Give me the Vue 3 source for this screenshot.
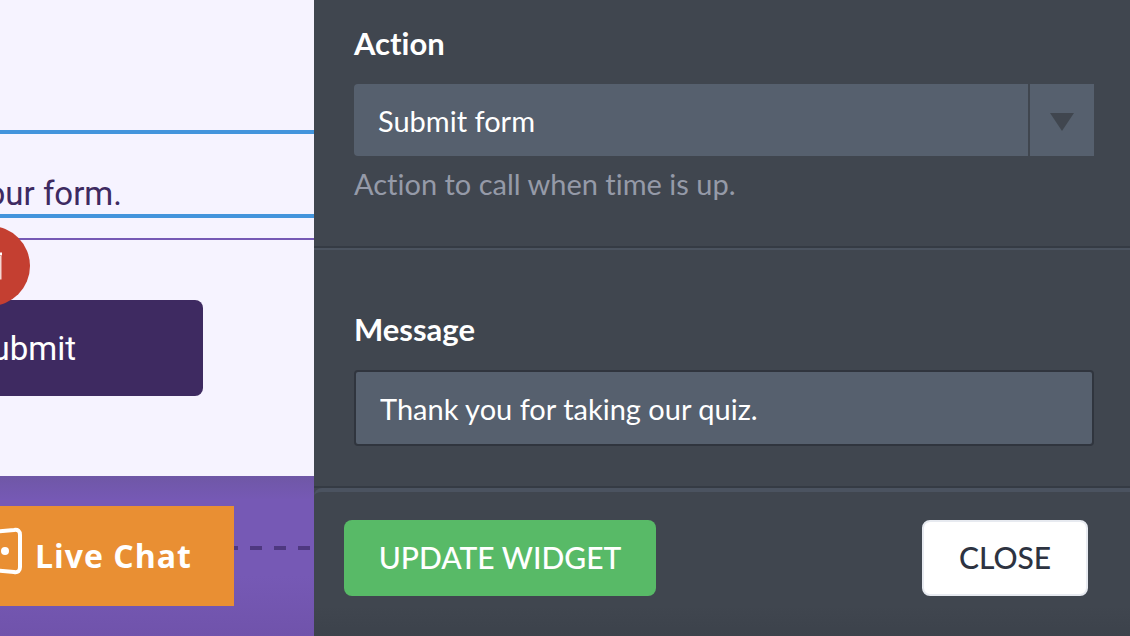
<script setup>
import { ref } from 'vue'

const action = ref('Submit form')
const message = ref('Thank you for taking our quiz.')
</script>

<template>
  <div class="editor">
    <main class="preview">
      <section class="form-card">
        <div class="widget">
          <p class="widget-text">our form.</p>
          <button class="remove" type="button" aria-label="Remove widget">
            <svg viewBox="0 0 24 32" width="24" height="32" aria-hidden="true">
              <path d="M0 4H24M8 4V1H16V4" fill="none" stroke="#fff" stroke-width="3" />
              <path d="M2 6V28H22V6" fill="none" stroke="#f3d6d2" stroke-width="3" />
              <path d="M9 10V24M15 10V24" stroke="#fff" stroke-width="2" />
            </svg>
          </button>
        </div>
        <div class="submit-row">
          <button class="submit" type="button">Submit</button>
        </div>
      </section>
      <div class="chat-row">
        <button class="chat" type="button">
          <svg class="chat-icon" viewBox="0 0 48 48" width="48" height="48" aria-hidden="true">
            <path
              d="M7 6L40 3Q46 2 46 8V40Q46 46 40 45L7 42Q2 42 2 37V11Q2 6 7 6Z"
              fill="none"
              stroke="#fff"
              stroke-width="4"
              stroke-linejoin="round"
            />
            <circle cx="31" cy="24" r="4" fill="#fff" />
            <circle cx="15" cy="24" r="4" fill="#fff" />
          </svg>
          <span>Live Chat</span>
        </button>
        <span class="dashes"></span>
      </div>
    </main>

    <aside class="panel">
      <section class="group action">
        <label class="title" for="action">Action</label>
        <div class="select">
          <select id="action" v-model="action">
            <option>Submit form</option>
          </select>
          <span class="arrow">
            <svg viewBox="0 0 24 18" width="24" height="18" aria-hidden="true">
              <path d="M0 0H24L12 18Z" fill="#40464f" />
            </svg>
          </span>
        </div>
        <p class="hint">Action to call when time is up.</p>
      </section>
      <section class="group message">
        <label class="title" for="message">Message</label>
        <input id="message" v-model="message" type="text" />
      </section>
      <footer class="actions">
        <button class="update" type="button">UPDATE WIDGET</button>
        <button class="close" type="button">CLOSE</button>
      </footer>
    </aside>
  </div>
</template>

<style>
body {
  margin: 0;
}
</style>

<style scoped>
* {
  box-sizing: border-box;
}
button,
input,
select {
  margin: 0;
  border: 0;
  font: inherit;
  color: inherit;
}
.editor {
  display: grid;
  grid-template-columns: minmax(0, 314fr) minmax(0, 816fr);
  min-height: 100vh;
  overflow: hidden;
}

.preview {
  display: flex;
  flex-direction: column;
  overflow: hidden;
  background: linear-gradient(#6f57a6, #7659b5 24px calc(100% - 60px), #7053ab);
  background-size: 100% 160px;
  background-position: bottom;
  font-family: Roboto, sans-serif;
}
.form-card {
  padding: 130px 0 80px;
  background: #f6f3ff;
}
.widget {
  position: relative;
  display: flex;
  justify-content: flex-end;
  height: 88px;
  padding: 36px 192px 0 0;
  border-top: 4px solid #4394dc;
  border-bottom: 4px solid #4394dc;
}
.widget-text {
  margin: 0;
  font-size: 33px;
  line-height: 48px;
  white-space: nowrap;
  color: #3e2a61;
}
.remove {
  position: absolute;
  left: -50px;
  top: 92px;
  display: grid;
  place-items: center;
  width: 80px;
  height: 80px;
  padding: 0;
  border-radius: 50%;
  background: #c43f31;
}
.submit-row {
  margin-top: 20px;
  padding-top: 60px;
  border-top: 2px solid #7659b5;
}
.submit {
  display: block;
  width: 360px;
  height: 96px;
  margin-left: -157px;
  padding: 0 127px 0 0;
  border-radius: 8px;
  background: #3e2a61;
  color: #fff;
  font-size: 33px;
  text-align: right;
}
.chat-row {
  display: flex;
  align-items: center;
  padding: 30px 0;
}
.chat {
  display: flex;
  flex: none;
  align-items: center;
  gap: 13px;
  height: 100px;
  margin-left: -60px;
  padding: 0 42px 2px 34px;
  background: #e98f33;
  color: #fff;
  font-family: "Open Sans", sans-serif;
  font-size: 32px;
  font-weight: 700;
  letter-spacing: 1px;
  white-space: nowrap;
}
.chat-icon {
  margin-bottom: 8px;
}
.dashes {
  flex: 1;
  height: 4px;
  margin-bottom: 16px;
  background: repeating-linear-gradient(90deg, #4e3880 0 4px, transparent 4px 16px, #4e3880 16px 24px);
}

.panel {
  display: flex;
  flex-direction: column;
  background: linear-gradient(#40464f calc(100% - 30px), #3c424b);
  color: #fff;
  font-family: Lato, sans-serif;
  font-size: 29px;
  font-variant-ligatures: none;
}
.group {
  display: flex;
  flex-direction: column;
  padding: 0 36px 0 40px;
}
.action {
  padding-top: 24px;
  padding-bottom: 42px;
  border-bottom: 2px solid #353b44;
}
.message {
  padding-top: 60px;
  padding-bottom: 40px;
  border-top: 2px solid #4b535f;
  border-bottom: 2px solid #353b44;
}
.title {
  font-size: 31px;
  font-weight: 700;
  line-height: 38px;
}
.select {
  position: relative;
  margin-top: 22px;
}
.select select {
  display: block;
  width: 100%;
  height: 72px;
  padding: 0 90px 0 24px;
  border-radius: 4px 0 0 4px;
  background: #56606e;
  appearance: none;
}
.arrow {
  position: absolute;
  inset: 0 0 0 auto;
  display: grid;
  place-items: center;
  width: 66px;
  padding-top: 4px;
  border-left: 2px solid #40464f;
  pointer-events: none;
}
.hint {
  margin: 8px 0 0;
  line-height: 40px;
  color: #959aa8;
}
.message input {
  width: 100%;
  height: 76px;
  margin-top: 22px;
  padding: 0 24px;
  border: 2px solid #30353e;
  border-radius: 4px;
  background: #56606e;
}
.actions {
  display: flex;
  flex: 1;
  align-items: flex-start;
  justify-content: space-between;
  padding: 28px 42px 40px 30px;
  border-top: 4px solid #4b5360;
  border-radius: 8px 0 0 0;
}
.actions button {
  height: 76px;
  padding: 0 34px 2px;
  border-radius: 8px;
  font-size: 30px;
  font-weight: 500;
}
.actions .update {
  min-width: 312px;
  background: #58ba67;
}
.actions .close {
  min-width: 166px;
  padding: 0 32px 2px;
  border: 2px solid #e7eaf0;
  background: #fff;
  color: #2d3341;
}
</style>
